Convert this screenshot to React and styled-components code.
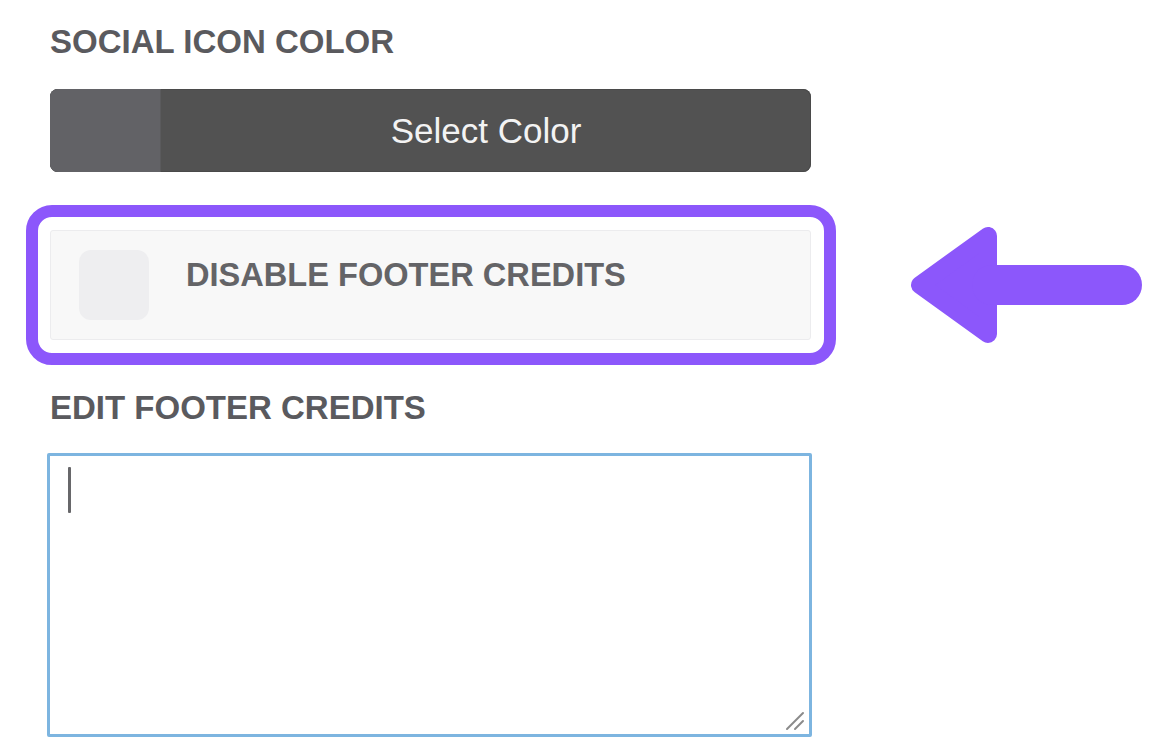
import React from "react";
import styled, { createGlobalStyle } from "styled-components";

const GlobalStyle = createGlobalStyle`
  html, body {
    margin: 0;
    padding: 0;
    background: #ffffff;
    font-family: "Liberation Sans", Arial, sans-serif;
  }
`;

const Page = styled.div`
  width: 1154px;
  height: 750px;
  padding-left: 50px;
  box-sizing: border-box;
  overflow: hidden;
`;

const FieldLabel = styled.div`
  font-size: 33px;
  line-height: 40px;
  font-weight: 700;
  color: #5a5a5e;
  margin-top: ${props => props.top}px;
  white-space: nowrap;
`;

const ColorButton = styled.div`
  margin-top: 27px;
  width: 761px;
  height: 83px;
  display: flex;
  border-radius: 8px;
  overflow: hidden;
  background: #525252;
  box-shadow: inset 0 0 0 1px #4a4a4a;
`;

const Swatch = styled.div`
  width: 110px;
  background: #626266;
  border-right: 1px solid #5a5a5c;
`;

const ButtonText = styled.div`
  flex: 1;
  display: flex;
  align-items: center;
  justify-content: center;
  color: #f3f3f3;
  font-size: 35px;
`;

const HighlightRow = styled.div`
  display: flex;
  align-items: center;
  margin-left: -24px;
  margin-top: 33px;
`;

const Highlight = styled.div`
  width: 810px;
  height: 160px;
  box-sizing: border-box;
  border: 12px solid #8c57fb;
  border-radius: 26px;
  padding: 13px 13px 0 12px;
`;

const OptionCard = styled.div`
  width: 761px;
  height: 110px;
  box-sizing: border-box;
  border: 1px solid #ececee;
  border-radius: 3px;
  background: #f8f8f8;
  display: flex;
  align-items: flex-start;
  padding: 19px 0 0 28px;
  gap: 37px;
`;

const CheckBox = styled.div`
  width: 70px;
  height: 70px;
  border-radius: 12px;
  background: #eeeef0;
  flex-shrink: 0;
`;

const OptionText = styled.div`
  margin-top: 5px;
  font-size: 32.6px;
  line-height: 40px;
  font-weight: 700;
  color: #646467;
  white-space: nowrap;
`;

const Arrow = styled.svg`
  margin-left: 74px;
  flex-shrink: 0;
`;

const TextBox = styled.div`
  position: relative;
  margin-top: 25px;
  margin-left: -3px;
  width: 765px;
  height: 284px;
  box-sizing: border-box;
  border: 3px solid #7db5e0;
  border-radius: 2px;
  background: #fff;
  padding: 11px 0 0 18px;
`;

const Caret = styled.div`
  width: 3px;
  height: 46px;
  border-radius: 1px;
  background: #67676a;
`;

const Grip = styled.svg`
  position: absolute;
  right: 3px;
  bottom: 3px;
`;

export default function App() {
  return (
    <>
      <GlobalStyle />
      <Page>
        <FieldLabel top={22}>SOCIAL ICON COLOR</FieldLabel>
        <ColorButton>
          <Swatch />
          <ButtonText>Select Color</ButtonText>
        </ColorButton>

        <HighlightRow>
          <Highlight>
            <OptionCard>
              <CheckBox />
              <OptionText>DISABLE FOOTER CREDITS</OptionText>
            </OptionCard>
          </Highlight>
          <Arrow width="240" height="130" viewBox="0 0 240 130">
            <polygon
              points="10,65 78,16 78,114"
              fill="#8c57fb"
              stroke="#8c57fb"
              strokeWidth="18"
              strokeLinejoin="round"
            />
            <line
              x1="82"
              y1="65"
              x2="212"
              y2="65"
              stroke="#8c57fb"
              strokeWidth="40"
              strokeLinecap="round"
            />
          </Arrow>
        </HighlightRow>

        <FieldLabel top={23}>EDIT FOOTER CREDITS</FieldLabel>
        <TextBox>
          <Caret />
          <Grip width="22" height="22" viewBox="0 0 22 22">
            <line x1="3" y1="20" x2="19" y2="4" stroke="#8a8a8a" strokeWidth="2" strokeLinecap="round" />
            <line x1="11" y1="20" x2="19" y2="12" stroke="#8a8a8a" strokeWidth="2" strokeLinecap="round" />
          </Grip>
        </TextBox>
      </Page>
    </>
  );
}
